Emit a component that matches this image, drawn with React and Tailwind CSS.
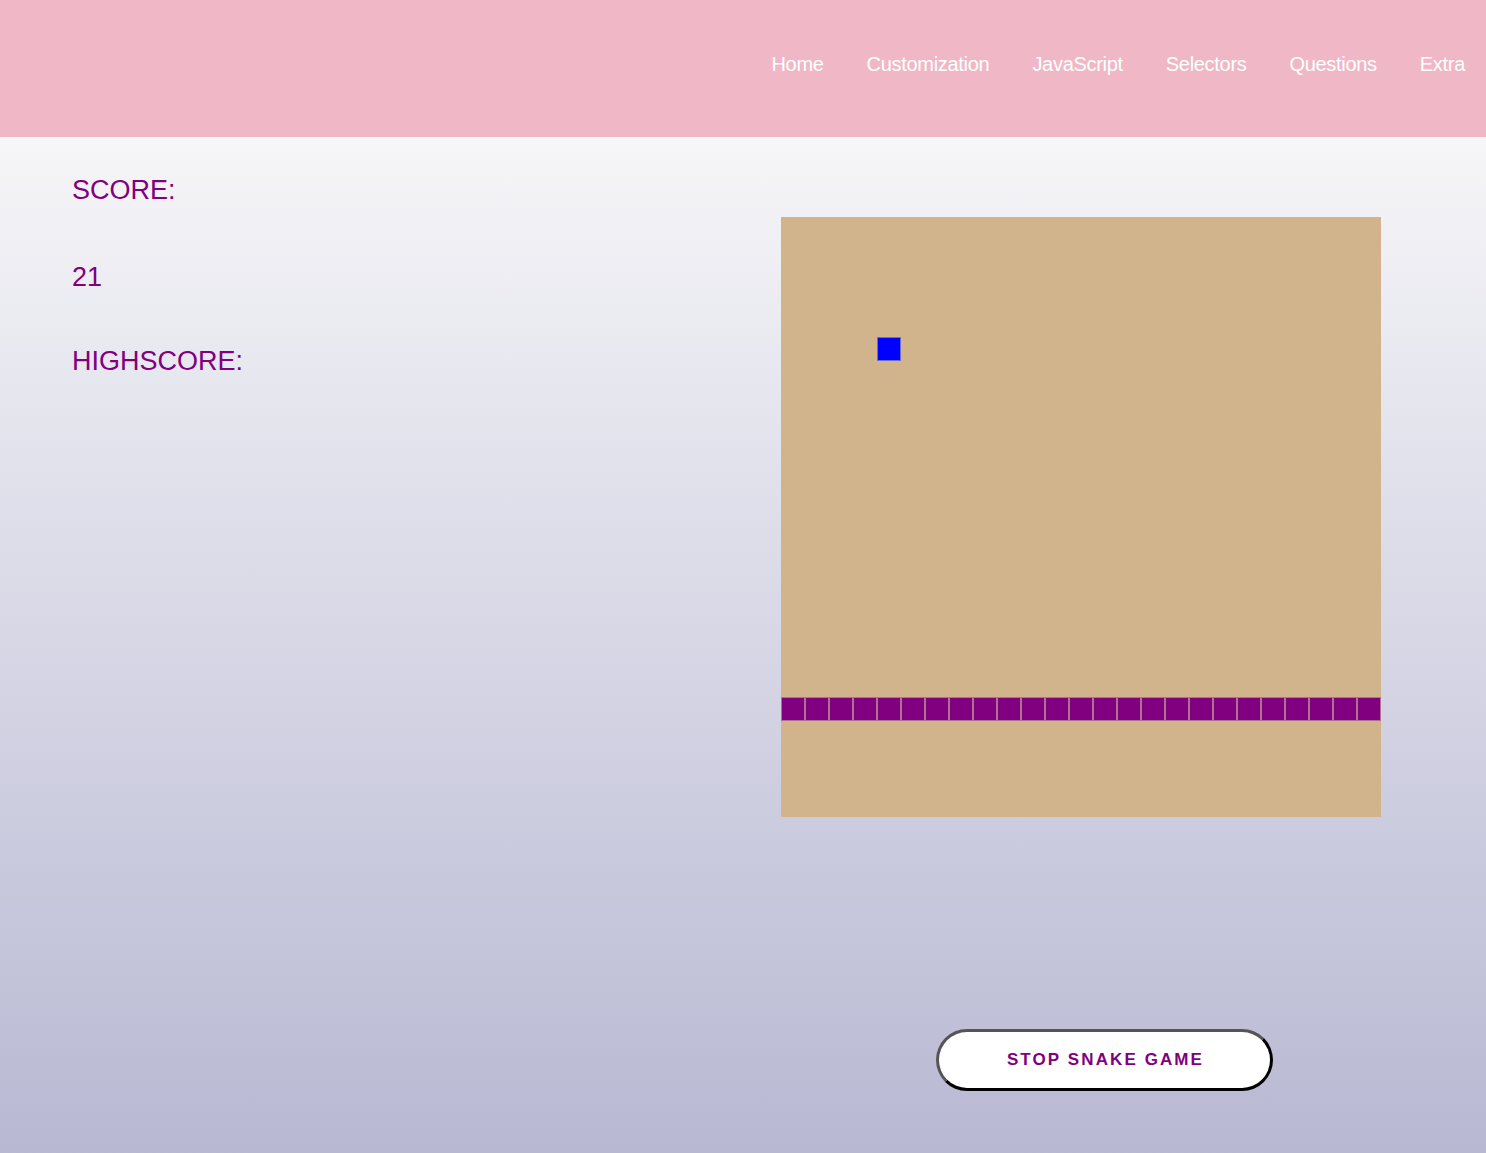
import React from "react";

const links = ["Home", "Customization", "JavaScript", "Selectors", "Questions", "Extra"];
const CELL = 24;

const App = () => {
  const snake = Array.from({ length: 25 }, (_, i) => ({ x: i, y: 20 }));
  const food = { x: 4, y: 5 };

  return (
    <div className="min-h-[1153px] flex flex-col font-['Liberation_Sans',Arial,sans-serif]">
      <nav className="h-[137px] bg-[#f0b8c6] flex items-center justify-end gap-[43px] pr-[21px] pb-[9px]">
        {links.map((link) => (
          <a key={link} href="#" className="text-white text-[20px] tracking-[-0.3px] leading-none">
            {link}
          </a>
        ))}
      </nav>

      <main className="flex-1 flex bg-gradient-to-b from-[#f6f6f8] to-[#b8b8d3] text-[#800080]">
        {/* scoreboard */}
        <div className="w-[781px] pl-[72px] pt-[38px] text-[27px] leading-[31px]">
          <p>SCORE:</p>
          <p className="mt-[56px]">21</p>
          <p className="mt-[53px]">HIGHSCORE:</p>
        </div>

        {/* game */}
        <div className="pt-[80px] flex flex-col">
          <div className="relative w-[600px] h-[600px] bg-[#d2b48c]">
            <div
              className="absolute w-[24px] h-[24px] bg-[#0000ff] border border-[#6b6bd0]"
              style={{ left: food.x * CELL, top: food.y * CELL }}
            />
            {snake.map((s, i) => (
              <div
                key={i}
                className="absolute w-[24px] h-[24px] bg-[#800080] border border-[#b07090]"
                style={{ left: s.x * CELL, top: s.y * CELL }}
              />
            ))}
          </div>
          <button className="mt-[212px] ml-[155px] w-[337px] h-[62px] bg-white rounded-full border-[3px] border-[#555] border-r-black border-b-black text-[#800080] font-bold text-[17px] tracking-[2.1px] pl-[2px]">
            STOP SNAKE GAME
          </button>
        </div>
      </main>
    </div>
  );
};

export default App;
